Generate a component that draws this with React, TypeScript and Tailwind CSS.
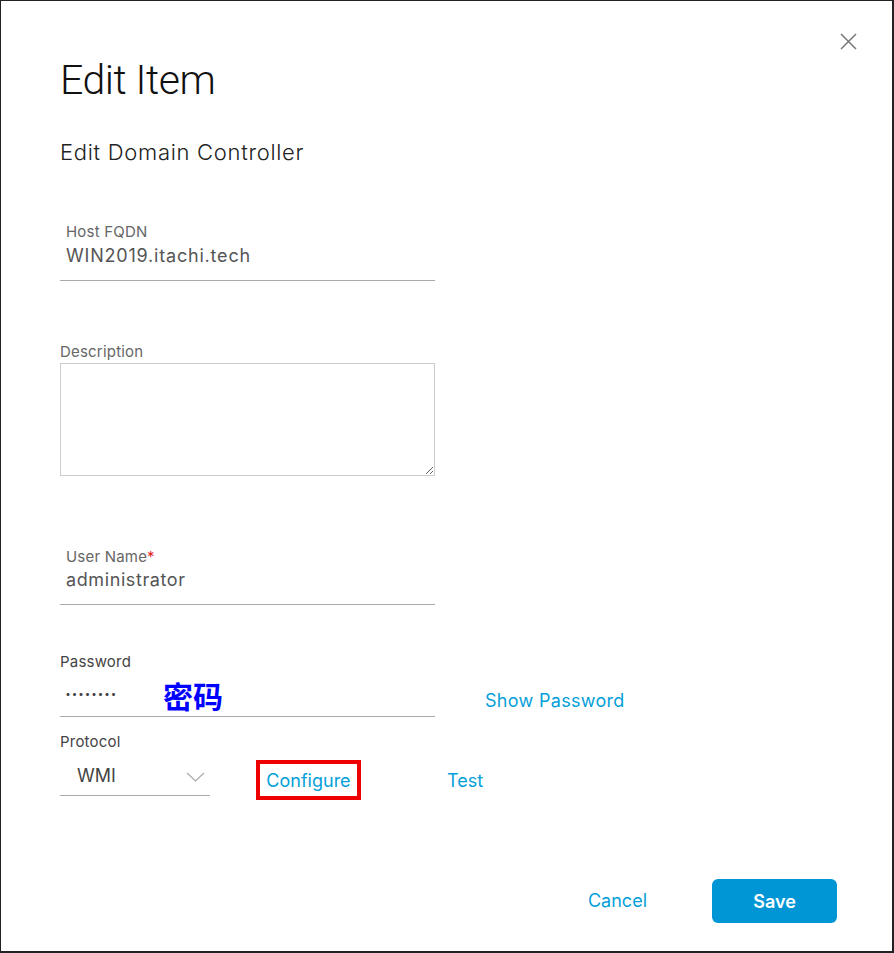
import React from "react";

export default function App() {
  return (
    <div className="relative w-[894px] h-[953px] bg-white border-t border-l border-r-2 border-b-2 border-[#222] font-['Inter','Noto_Sans_CJK_SC',sans-serif] text-[#333]">
      <button className="absolute top-[32px] right-[35px] w-[17px] h-[17px] text-[#777]" aria-label="Close">
        <svg width="17" height="17" viewBox="0 0 17 17" fill="none" stroke="currentColor" strokeWidth="1.5">
          <path d="M1 1L16 16M16 1L1 16" />
        </svg>
      </button>

      <div className="pl-[59px] pr-[55px] pt-[59px] flex flex-col">
        <h1 className="font-['Roboto',sans-serif] font-light text-[41px] leading-[40px] tracking-[-0.5px] text-[#111]">Edit Item</h1>
        <h2 className="mt-[41px] text-[22px] leading-[22px] font-light tracking-[0.7px] text-[#222]">Edit Domain Controller</h2>

        {/* Host FQDN */}
        <div className="mt-[53px] w-[375px] h-[65px] border-b border-[#aaa] pt-[8px] pl-[6px]">
          <div className="text-[15px] leading-[16px] text-[#666] tracking-[0.2px]">Host FQDN</div>
          <div className="mt-[6px] text-[18px] leading-[20px] text-[#555] tracking-[0.8px]">WIN2019.itachi.tech</div>
        </div>

        {/* Description */}
        <div className="mt-[63px] text-[15px] leading-[16px] text-[#666] tracking-[0.2px]">Description</div>
        <textarea className="mt-[3px] w-[375px] h-[113px] border border-[#ccc] outline-none resize" />

        {/* User Name */}
        <div className="mt-[65px] w-[375px] h-[64px] border-b border-[#aaa] pt-[8px] pl-[6px]">
          <div className="text-[15px] leading-[16px] text-[#666] tracking-[0.2px]">
            User Name<span className="text-[#e2231a]">*</span>
          </div>
          <div className="mt-[5px] text-[18px] leading-[20px] text-[#555] tracking-[0.6px]">administrator</div>
        </div>

        {/* Password */}
        <div className="mt-[49px] text-[15px] leading-[16px] text-[#444] tracking-[0.2px]">Password</div>
        <div className="flex items-end">
          <div className="w-[375px] h-[47px] border-b border-[#aaa] flex items-end pb-[6px] pl-[5px]">
            <span className="text-[18px] leading-[30px] font-bold text-[#444] tracking-[0.5px]">········</span>
            <span className="ml-[46px] text-[30px] leading-[30px] font-bold text-[#0000ff] font-['Noto_Sans_CJK_SC',sans-serif]">密码</span>
          </div>
          <button className="ml-[50px] mb-[6px] text-[18px] leading-[20px] text-[#049fd9] tracking-[0.3px]">Show Password</button>
        </div>

        {/* Protocol */}
        <div className="mt-[17px] text-[15px] leading-[16px] text-[#444] tracking-[0.2px]">Protocol</div>
        <div className="flex items-start">
          <div className="w-[150px] h-[46px] border-b border-[#aaa] pt-[16px] pl-[17px] pr-[5px] flex items-start justify-between">
            <span className="text-[18px] leading-[20px] text-[#444]">WMI</span>
            <svg width="19" height="10" viewBox="0 0 19 10" fill="none" stroke="#aaa" strokeWidth="1.2" className="mt-[6px]">
              <path d="M1 1L9.5 9L18 1" />
            </svg>
          </div>
          <div className="ml-[46px] mt-[10px] w-[105px] h-[40px] border-4 border-[#ee0000] flex items-center justify-center pt-[1px]">
            <span className="text-[18px] leading-[20px] text-[#049fd9]">Configure</span>
          </div>
          <div className="ml-[86px] mt-[10px] h-[40px] flex items-center pt-[2px]">
            <span className="text-[18px] leading-[20px] text-[#049fd9]">Test</span>
          </div>
        </div>

        {/* Footer */}
        <div className="mt-[79px] flex items-center justify-end">
          <button className="text-[18px] leading-[20px] text-[#049fd9]">Cancel</button>
          <button className="ml-[65px] w-[125px] h-[44px] rounded-[6px] bg-[#0096d6] text-white text-[18px] font-semibold">Save</button>
        </div>
      </div>
    </div>
  );
}
